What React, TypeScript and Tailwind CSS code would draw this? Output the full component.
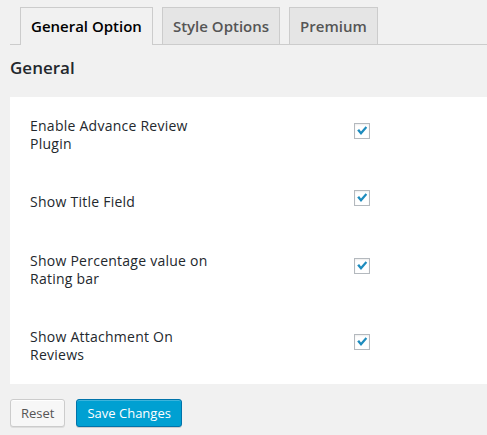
import React, { useState } from 'react';

const tabs = ['General Option', 'Style Options', 'Premium'];

const options = [
  { key: 'enable', label: 'Enable Advance Review Plugin' },
  { key: 'title', label: 'Show Title Field' },
  { key: 'percentage', label: 'Show Percentage value on Rating bar' },
  { key: 'attachment', label: 'Show Attachment On Reviews' },
];

function CheckBox({ checked, onToggle }: { checked: boolean; onToggle: () => void }) {
  return (
    <button
      type="button"
      onClick={onToggle}
      className="w-4 h-4 mb-2 border border-[#b4b9be] bg-white shadow-[inset_0_1px_2px_rgba(0,0,0,0.07)] flex items-center justify-center p-0"
    >
      {checked && (
        <svg width="14" height="14" viewBox="0 0 14 14">
          <path d="M2.2 6.6 L4.1 5.1 L6 7.6 L10.6 2.2 L12.2 3.8 L6 11 Z" fill="#1e8cbe" />
        </svg>
      )}
    </button>
  );
}

export default function App() {
  const [active, setActive] = useState(0);
  const [values, setValues] = useState<Record<string, boolean>>({
    enable: true,
    title: true,
    percentage: true,
    attachment: true,
  });

  return (
    <div className="min-h-[435px] bg-[#f1f1f1] pl-[10px] font-['Open_Sans',sans-serif] text-[#23282d]">
      {/* Tabs */}
      <div className="flex gap-[9px] pl-[10px] pt-[7px] border-b border-[#ccc]">
        {tabs.map((tab, i) => (
          <button
            key={tab}
            type="button"
            onClick={() => setActive(i)}
            className={`h-[37px] px-[10px] border border-b-0 border-[#ccc] text-[15px] font-semibold leading-6 ${
              i === active ? 'bg-[#f1f1f1] text-black -mb-px h-[38px] pb-px' : 'bg-[#e5e5e5] text-[#555]'
            }`}
          >
            {tab}
          </button>
        ))}
      </div>

      {/* Section heading */}
      <h2 className="mt-[12px] mb-[18px] text-[17px] font-semibold leading-[22px] text-[#23282d]">General</h2>

      {/* Settings panel */}
      <div className="bg-white pl-5">
        {options.map((opt) => (
          <div key={opt.key} className="flex items-center">
            <div className="w-[198px] py-5 text-[14px] leading-[1.3] tracking-[0.25px] text-[#23282d]">{opt.label}</div>
            <div className="ml-[126px]">
              <CheckBox
                checked={values[opt.key]}
                onToggle={() => setValues({ ...values, [opt.key]: !values[opt.key] })}
              />
            </div>
          </div>
        ))}
      </div>

      {/* Actions */}
      <div className="flex gap-[11px] mt-[15px]">
        <button
          type="button"
          className="h-[28px] px-[10px] pb-px rounded-[3px] border border-[#ccc] bg-[#f7f7f7] text-[13px] leading-[26px] text-[#555] shadow-[inset_0_1px_0_#fff,0_1px_0_rgba(0,0,0,0.08)]"
        >
          Reset
        </button>
        <button
          type="button"
          className="h-[28px] px-[10px] pb-px rounded-[3px] border border-[#0073aa] bg-[#00a0d2] text-[13px] leading-[26px] text-white shadow-[inset_0_1px_0_rgba(120,200,230,0.5),0_1px_0_rgba(0,0,0,0.15)]"
        >
          Save Changes
        </button>
      </div>
    </div>
  );
}
